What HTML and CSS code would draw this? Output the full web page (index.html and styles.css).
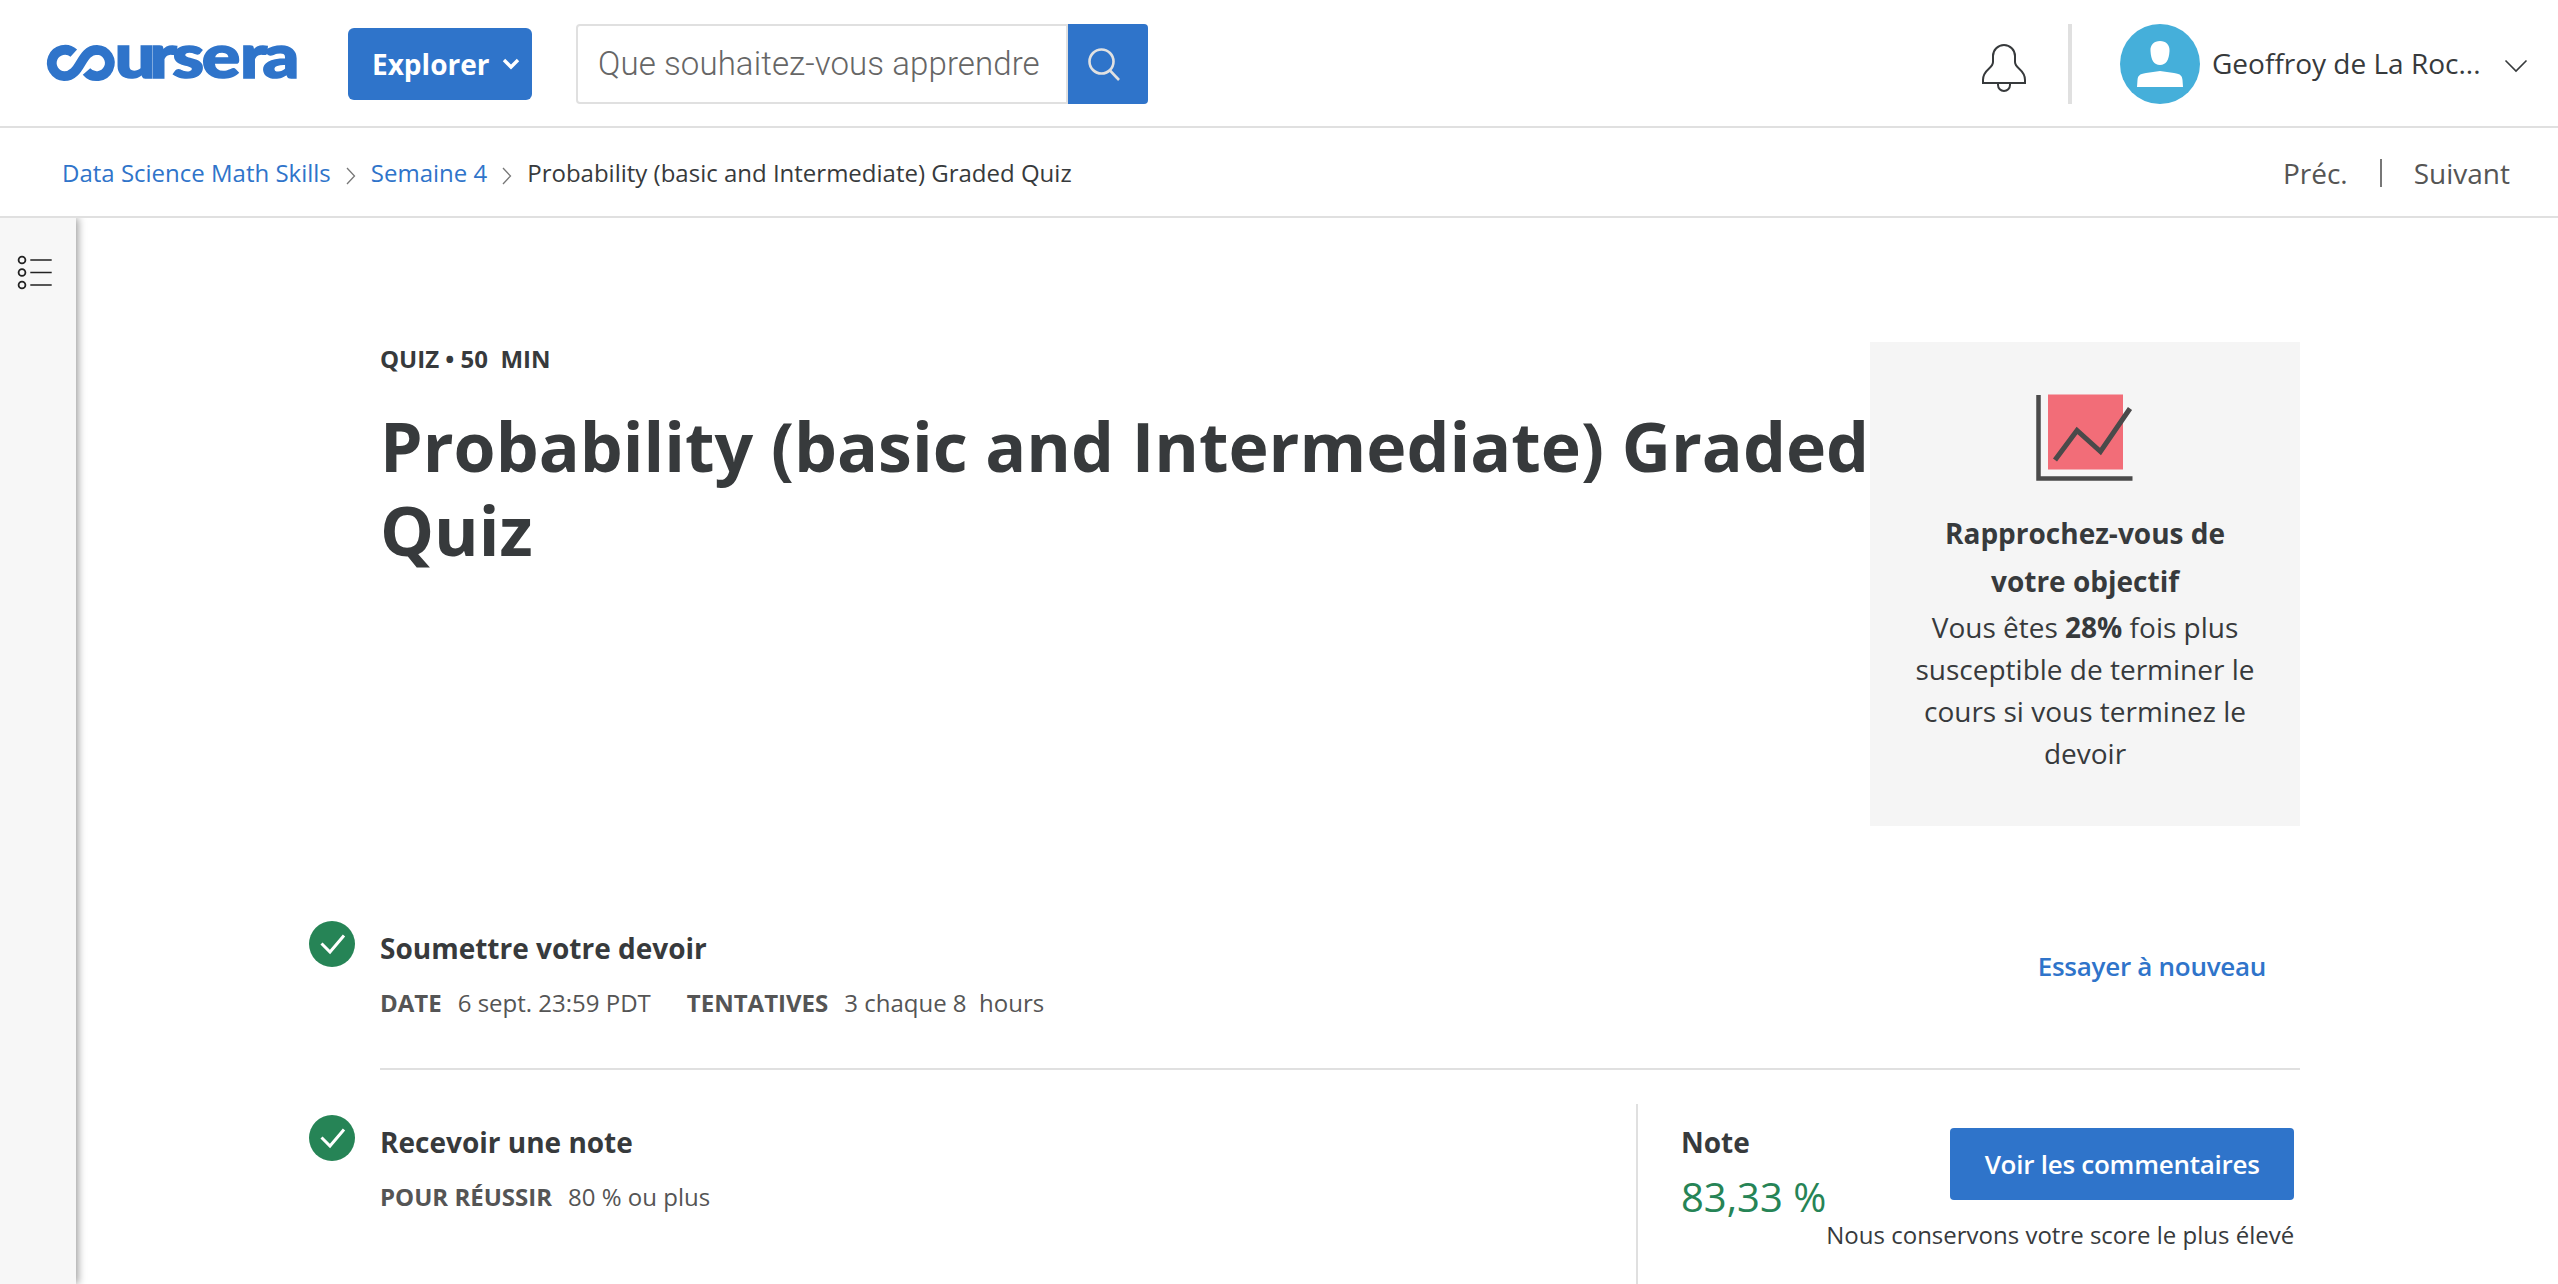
FILE: index.html
```html
<!DOCTYPE html>
<html lang="fr">
<head>
<meta charset="utf-8">
<title>Probability (basic and Intermediate) Graded Quiz | Coursera</title>
<link rel="stylesheet" href="styles.css">
</head>
<body>
<header class="topbar">
  <a class="logo" aria-label="Coursera">
    <svg width="262" height="96" viewBox="44 14 262 96">
      <path class="logo-mark" d="M73.800 51.200A13.200 13.200 0 1 0 64.200 74.200C81.500 74.200 80 47.800 97 47.800A13.200 13.200 0 1 1 86.500 69.500"/>
      <text class="logo-text" transform="scale(1.18 1)" y="76.500" x="97.200 126.800 146 171 203.500 222.500">ursera</text>
    </svg>
  </a>
  <button class="explore"><span>Explorer</span>
    <svg width="18" height="14" viewBox="0 0 18 14"><path d="M2 3l7 7 7-7" fill="none" stroke="#fff" stroke-width="3.400"/></svg>
  </button>
  <div class="search">
    <div class="search-field">Que souhaitez-vous apprendre</div>
    <button class="search-button">
      <svg width="36" height="36" viewBox="0 0 36 36" fill="none" stroke="#e1e1e1" stroke-width="2.600"><circle cx="14.500" cy="14.500" r="12"/><path d="M23 23.500L32 33"/></svg>
    </button>
  </div>
  <svg class="bell" width="46" height="50" viewBox="0 0 46 50" fill="none" stroke="#373a3c" stroke-width="2"><path d="M2 40V37C2 26 12 26 12 19V13A11 11 0 0 1 34 13V19C34 26 44 26 44 37V40ZM17 40V42A6 6 0 0 0 29 42V40"/></svg>
  <div class="divider"></div>
  <svg class="avatar" width="80" height="80" viewBox="0 0 80 80"><circle cx="40" cy="40" r="40" fill="#45afda"/><path fill="#fff" d="M40 17C46 17 50 21 49.500 27C49 36 46 41 40 41C34 41 31 36 30.500 27C30 21 34 17 40 17ZM40 47L54 49C61 50 62 52 62.500 56L63 63H17L17.500 56C18 52 19 50 26 49Z"/></svg>
  <span class="user">Geoffroy de La Roc...</span>
  <svg class="chevron" width="24" height="14" viewBox="0 0 24 14"><path d="M1.500 1.500L12 12 22.500 1.500" fill="none" stroke="#373a3c" stroke-width="1.600"/></svg>
</header>
<nav class="crumbbar">
  <a class="crumb">Data Science Math Skills</a>
  <svg class="sep" width="10" height="18" viewBox="0 0 10 18"><path d="M1 1l7.500 8L1 17" fill="none" stroke="#777" stroke-width="1.300"/></svg>
  <a class="crumb">Semaine 4</a>
  <svg class="sep" width="10" height="18" viewBox="0 0 10 18"><path d="M1 1l7.500 8L1 17" fill="none" stroke="#777" stroke-width="1.300"/></svg>
  <span class="crumb-current">Probability (basic and Intermediate) Graded Quiz</span>
  <div class="pager"><a>Préc.</a><i></i><a>Suivant</a></div>
</nav>
<div class="page">
  <aside class="rail">
    <svg width="36" height="36" viewBox="0 0 36 36" fill="none" stroke="#222"><g stroke-width="1.800"><circle cx="5" cy="5" r="3.400"/><circle cx="5" cy="17.500" r="3.400"/><circle cx="5" cy="30" r="3.400"/></g><path stroke-width="1.600" d="M13.300 5H34.700M13.300 17.500H34.700M13.300 30H34.700"/></svg>
  </aside>
  <main class="content">
    <section class="hero">
      <div class="hero-text">
        <div class="kind">QUIZ • 50 &nbsp;MIN</div>
        <h1>Probability (basic and Intermediate) Graded Quiz</h1>
      </div>
      <div class="goal">
        <svg width="98" height="90" viewBox="0 0 98 90" fill="none"><path fill="#f26d78" d="M12 .5h75v75H12z"/><g stroke="#4a4a4a"><path stroke-width="4.500" d="M2.500 1V84.500H96.500"/><path stroke-width="5" d="M19 66L41 36.500 64.500 57.500 94 14.500"/></g></svg>
        <h2>Rapprochez-vous de votre objectif</h2>
        <p>Vous êtes <b>28%</b> fois plus susceptible de terminer le cours si vous terminez le devoir</p>
      </div>
    </section>
    <section class="step step-submit">
      <svg class="check" width="46" height="46" viewBox="0 0 46 46"><circle cx="23" cy="23" r="23" fill="#268456"/><path d="M12.500 22.500L21 31 35 14.500" fill="none" stroke="#fff" stroke-width="3"/></svg>
      <div class="step-body">
        <div class="step-info">
          <h3>Soumettre votre devoir</h3>
          <div class="meta"><b>DATE</b><span>6 sept. 23:59 PDT</span><b>TENTATIVES</b><span>3 chaque 8 &nbsp;hours</span></div>
        </div>
        <a class="retry">Essayer à nouveau</a>
      </div>
    </section>
    <section class="step step-grade">
      <svg class="check" width="46" height="46" viewBox="0 0 46 46"><circle cx="23" cy="23" r="23" fill="#268456"/><path d="M12.500 22.500L21 31 35 14.500" fill="none" stroke="#fff" stroke-width="3"/></svg>
      <div class="step-body">
        <div class="step-info">
          <h3>Recevoir une note</h3>
          <div class="meta"><b>POUR RÉUSSIR</b><span>80 % ou plus</span></div>
        </div>
        <div class="grade">
          <div class="grade-value"><h3>Note</h3><div class="score">83,33 %</div></div>
          <div class="grade-action"><button class="feedback">Voir les commentaires</button><div class="note">Nous conservons votre score le plus élevé</div></div>
        </div>
      </div>
    </section>
  </main>
</div>
</body>
</html>
```
FILE: styles.css
```css
* { box-sizing: border-box; }
body {
  margin: 0;
  height: 1284px;
  overflow: hidden;
  display: flex;
  flex-direction: column;
  background: #fff;
  color: #373a3c;
  font-family: "Open Sans", sans-serif;
  font-size: 28px;
}
h1, h2, h3, p { margin: 0; }
button { border: 0; padding: 0; font: inherit; color: #fff; background: #2f74ca; }
svg { display: block; flex: none; }

.topbar { display: flex; align-items: center; height: 128px; flex: none; padding: 2px 30px 0 44px; border-bottom: 2px solid #e0e0e0; }
.logo { margin-right: 42px; }
.logo-mark { fill: none; stroke: #2f74ca; stroke-width: 9.800; }
.logo-text { font-family: Lato, sans-serif; font-weight: 900; font-size: 61px; fill: #2f74ca; stroke: #2f74ca; stroke-width: 1.600; }
.explore { display: flex; align-items: center; gap: 13px; width: 184px; height: 72px; padding-left: 24px; border-radius: 6px; font-weight: 700; white-space: nowrap; }
.explore span { padding-bottom: 1px; }
.search { display: flex; width: 572px; height: 80px; margin-left: 44px; }
.search-field { flex: none; width: 492px; padding-left: 20px; border: 2px solid #e0e0e0; border-radius: 4px 0 0 4px; color: #666; font: 300 33px/76px Roboto, sans-serif; letter-spacing: .1px; white-space: nowrap; }
.search-button { display: flex; width: 80px; padding: 23px 0 0 19px; border-radius: 0 4px 4px 0; }
.bell { margin: 8px 41px 0 auto; }
.divider { width: 4px; height: 80px; margin-right: 48px; background: #e0e0e0; }
.user { width: 292px; padding: 0 0 2px 12px; white-space: nowrap; }
.chevron { margin: 4px 0 0 12px; }

.crumbbar { display: flex; align-items: center; height: 90px; flex: none; padding: 1px 48px 0 62px; border-bottom: 2px solid #e0e0e0; font-size: 24px; white-space: nowrap; }
.crumb { color: #2f74ca; }
.sep { margin: 6px 15px 0; }
.pager { display: flex; align-items: center; margin-left: auto; color: #555; font-size: 28px; }
.pager i { width: 2px; height: 28px; margin: 0 32px; background: #777; }

.page { display: flex; flex: 1; min-height: 0; }
.rail { width: 76px; flex: none; padding: 37px 0 0 17px; background: #f7f7f7; box-shadow: 2px 0 8px rgba(0, 0, 0, .4); clip-path: inset(0 -16px 0 0); }
.content { width: 1991px; flex: none; margin-left: 233px; padding-top: 124px; }
.hero { display: flex; height: 484px; margin-left: 71px; }
.hero-text { width: 1490px; }
.kind { font-size: 24px; line-height: 34px; font-weight: 700; }
h1 { margin-top: 28px; font-size: 68px; line-height: 84px; font-weight: 700; }
.goal { display: flex; flex-direction: column; align-items: center; width: 430px; padding: 52px 30px 0; background: #f5f5f5; text-align: center; }
.goal h2 { margin-top: 25px; padding: 0 30px; font-size: 28px; line-height: 48px; font-weight: 700; }
.goal p { margin-top: 1px; line-height: 42px; }

.step { display: grid; grid-template-columns: 71px 1920px; }
.step-body { display: flex; justify-content: space-between; }
.step-submit .step-body { height: 244px; border-bottom: 2px solid #e0e0e0; }
.step-submit .check { margin-top: 95px; }
.step-submit .step-info { padding-top: 102px; }
.step-grade .check { margin-top: 45px; }
.step-grade .step-info { padding-top: 52px; }
h3 { font-size: 28px; line-height: 40px; font-weight: 700; }
.meta { display: flex; margin-top: 17px; font-size: 24px; line-height: 36px; color: #555; white-space: nowrap; }
.meta b { margin-right: 16px; }
.meta span { margin-right: 36px; }
.retry { margin: 120px 34px 0 0; font-size: 26px; line-height: 40px; font-weight: 600; letter-spacing: -.28px; color: #2f74ca; }
.grade { display: flex; justify-content: space-between; width: 664px; height: 180px; margin-top: 34px; padding: 17px 6px 0 43px; border-left: 2px solid #e0e0e0; white-space: nowrap; }
.grade-value { padding-top: 1px; }
.score { margin-top: 7px; font-size: 40px; line-height: 56px; color: #268456; }
.grade-action { display: flex; flex-direction: column; align-items: flex-end; padding-top: 7px; }
.feedback { width: 344px; height: 72px; border-radius: 4px; font-size: 26px; font-weight: 600; letter-spacing: -.25px; }
.note { margin-top: 17px; font-size: 24px; line-height: 36px; }
```
